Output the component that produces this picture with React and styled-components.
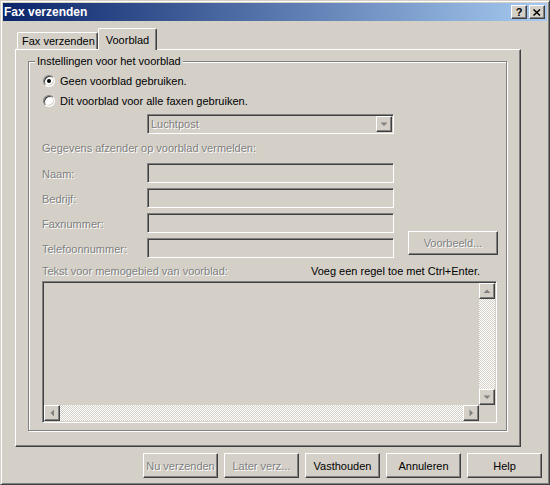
import React from 'react';
import styled, { createGlobalStyle, css } from 'styled-components';

const FACE = '#D4D0C8';
const HI = '#FFFFFF';
const SH = '#808080';
const DK = '#404040';

const Global = createGlobalStyle`
  html, body { margin: 0; padding: 0; background: ${FACE}; }
  body {
    font-family: "Liberation Sans", Arial, sans-serif;
    font-size: 11px;
    color: #000;
  }
  * { box-sizing: border-box; }
`;

const raised = css`
  border: 1px solid;
  border-color: ${HI} ${DK} ${DK} ${HI};
  box-shadow: inset -1px -1px 0 ${SH};
  background: ${FACE};
`;

const sunken = css`
  border: 1px solid;
  border-color: ${SH} ${HI} ${HI} ${SH};
  box-shadow: inset 1px 1px 0 ${DK}, inset -1px -1px 0 ${FACE};
  background: ${FACE};
`;

const disabledText = css`
  color: ${SH};
  text-shadow: 1px 1px 0 ${HI};
`;

const Window = styled.div`
  width: 550px;
  height: 485px;
  background: ${FACE};
  border: 1px solid;
  border-color: ${FACE} ${DK} ${DK} ${FACE};
  box-shadow: inset 1px 1px 0 ${HI}, inset -1px -1px 0 ${SH};
  padding: 2px;
  display: flex;
  flex-direction: column;
`;

const TitleBar = styled.div`
  height: 18px;
  flex: none;
  background: linear-gradient(to right, #0a246a, #a6caf0);
  display: flex;
  align-items: center;
  padding: 0 2px 0 1px;
`;

const TitleText = styled.div`
  flex: 1;
  color: #fff;
  font-weight: bold;
  font-size: 12px;
`;

const CaptionButton = styled.button`
  width: 16px;
  height: 14px;
  padding: 0;
  margin-left: 2px;
  ${raised}
  font: bold 11px "Liberation Sans", Arial, sans-serif;
  color: #000;
  display: flex;
  align-items: center;
  justify-content: center;
  line-height: 12px;
`;

const Body = styled.div`
  flex: 1;
  display: flex;
  flex-direction: column;
  padding: 7px 5px 0 12px;
`;

const TabStrip = styled.div`
  display: flex;
  align-items: flex-end;
  height: 21px;
  padding-left: 2px;
  position: relative;
  z-index: 1;
`;

const Tab = styled.div`
  height: ${(p) => (p.$active ? 22 : 17)}px;
  margin-bottom: ${(p) => (p.$active ? -1 : 0)}px;
  padding: ${(p) => (p.$active ? '0 7px 0 7px' : '0 2px 0 4px')};
  background: ${FACE};
  border-top: 1px solid ${HI};
  border-left: 1px solid ${HI};
  border-right: 1px solid ${DK};
  box-shadow: inset -1px 0 0 ${SH};
  border-radius: 2px 2px 0 0;
  display: flex;
  align-items: center;
  white-space: nowrap;
`;

const Panel = styled.div`
  width: 506px;
  height: 398px;
  border: 1px solid;
  border-color: ${HI} ${DK} ${DK} ${HI};
  box-shadow: inset -1px -1px 0 ${SH};
  display: flex;
  flex-direction: column;
  padding: 5px 13px 15px 12px;
`;

const GroupBox = styled.fieldset`
  flex: 1;
  margin: 0;
  min-width: 0;
  padding: 0;
  border: 1px solid ${SH};
  box-shadow: inset 1px 1px 0 ${HI}, 1px 1px 0 ${HI};
  display: flex;
  flex-direction: column;
`;

const Legend = styled.legend`
  margin-left: 6px;
  padding: 0 2px;
  line-height: 13px;
  background: ${FACE};
`;

const GroupContent = styled.div`
  flex: 1;
  display: flex;
  flex-direction: column;
  padding: 3px 9px 0 13px;
`;

const RadioRow = styled.label`
  display: flex;
  align-items: center;
  height: 20px;
`;

const RadioCircle = styled.span`
  position: relative;
  width: 12px;
  height: 12px;
  margin-left: 1px;
  margin-right: 5px;
  border-radius: 50%;
  border: 1px solid;
  border-color: ${SH} ${HI} ${HI} ${SH};
  box-shadow: inset 1px 1px 0 ${DK}, inset -1px -1px 0 ${FACE};
  background: #fff;
  flex: none;

  &::after {
    content: '';
    display: ${(p) => (p.$checked ? 'block' : 'none')};
    position: absolute;
    left: 3px;
    top: 3px;
    width: 4px;
    height: 4px;
    border-radius: 50%;
    background: #000;
  }
`;

const Combo = styled.div`
  margin: 3px 0 0 105px;
  width: 247px;
  height: 20px;
  ${sunken}
  padding: 1px;
  display: flex;
  align-items: center;
`;

const ComboText = styled.span`
  flex: 1;
  padding-left: 2px;
  ${disabledText}
`;

const ScrollButton = styled.div`
  width: 16px;
  height: 16px;
  flex: none;
  ${raised}
  display: flex;
  align-items: center;
  justify-content: center;
`;

const SectionLabel = styled.div`
  margin-top: 4px;
  height: 20px;
  display: flex;
  align-items: center;
  ${disabledText}
`;

const FieldRow = styled.div`
  margin-top: 5px;
  height: 20px;
  display: flex;
  align-items: flex-end;
`;

const FieldLabel = styled.div`
  flex: none;
  width: 105px;
  height: 20px;
  display: flex;
  align-items: center;
  padding-top: 2px;
  ${disabledText}
`;

const TextField = styled.div`
  flex: none;
  width: 247px;
  height: 20px;
  ${sunken}
`;

const PushButton = styled.button`
  flex: none;
  width: ${(p) => p.$w || 75}px;
  height: ${(p) => p.$h || 25}px;
  margin: 0 0 ${(p) => p.$mb || 0}px ${(p) => p.$ml || 0}px;
  padding: 0;
  ${raised}
  font: 11px "Liberation Sans", Arial, sans-serif;
  color: #000;
  ${(p) => p.disabled && disabledText}
`;

const MemoHeader = styled.div`
  margin-top: 6px;
  height: 14px;
  display: flex;
  align-items: center;
  justify-content: space-between;
  padding-right: 17px;
`;

const MemoLabel = styled.span`
  ${disabledText}
`;

const Memo = styled.div`
  margin-top: 3px;
  width: 455px;
  height: 142px;
  ${sunken}
  padding: 1px;
  display: grid;
  grid-template-columns: 1fr 16px;
  grid-template-rows: 1fr 16px;
`;

const ScrollBar = styled.div`
  display: flex;
  flex-direction: ${(p) => (p.$vertical ? 'column' : 'row')};
  min-width: 0;
  min-height: 0;
`;

const Track = styled.div`
  flex: 1;
  background: repeating-conic-gradient(${HI} 0 25%, ${FACE} 0 50%) 0 0 / 2px 2px;
`;

const Corner = styled.div`
  background: ${FACE};
`;

const ButtonRow = styled.div`
  display: flex;
  justify-content: flex-end;
  gap: 6px;
  margin-top: 6px;
`;

const Arrow = ({ dir }) => {
  const pts = {
    up: '0.5,4 4,0.5 7.5,4',
    down: '0.5,0.5 4,4 7.5,0.5',
    left: '4,0.5 0.5,4 4,7.5',
    right: '0.5,0.5 4,4 0.5,7.5',
  }[dir];
  const vertical = dir === 'up' || dir === 'down';
  return (
    <svg width={vertical ? 8 : 5} height={vertical ? 5 : 8} viewBox={vertical ? '0 0 8 5' : '0 0 5 8'}>
      <polygon points={pts} fill={SH} />
    </svg>
  );
};

const fields = ['Naam:', 'Bedrijf:', 'Faxnummer:', 'Telefoonnummer:'];

export default function App() {
  return (
    <>
      <Global />
      <Window>
        <TitleBar>
          <TitleText>Fax verzenden</TitleText>
          <CaptionButton>?</CaptionButton>
          <CaptionButton>
            <svg width="8" height="7" viewBox="0 0 8 7">
              <path d="M0.5 0.5 L7 6.5 M7 0.5 L0.5 6.5" stroke="#000" strokeWidth="1.5" />
            </svg>
          </CaptionButton>
        </TitleBar>
        <Body>
          <TabStrip>
            <Tab>Fax verzenden</Tab>
            <Tab $active>Voorblad</Tab>
          </TabStrip>
          <Panel>
            <GroupBox>
              <Legend>Instellingen voor het voorblad</Legend>
              <GroupContent>
                <RadioRow>
                  <RadioCircle $checked />
                  Geen voorblad gebruiken.
                </RadioRow>
                <RadioRow>
                  <RadioCircle />
                  Dit voorblad voor alle faxen gebruiken.
                </RadioRow>
                <Combo>
                  <ComboText>Luchtpost</ComboText>
                  <ScrollButton>
                    <Arrow dir="down" />
                  </ScrollButton>
                </Combo>
                <SectionLabel>Gegevens afzender op voorblad vermelden:</SectionLabel>
                {fields.map((f, i) => (
                  <FieldRow key={f}>
                    <FieldLabel>{f}</FieldLabel>
                    <TextField />
                    {i === fields.length - 1 && (
                      <PushButton disabled $w={90} $h={24} $ml={14} $mb={3}>
                        Voorbeeld...
                      </PushButton>
                    )}
                  </FieldRow>
                ))}
                <MemoHeader>
                  <MemoLabel>Tekst voor memogebied van voorblad:</MemoLabel>
                  <span>Voeg een regel toe met Ctrl+Enter.</span>
                </MemoHeader>
                <Memo>
                  <div />
                  <ScrollBar $vertical>
                    <ScrollButton>
                      <Arrow dir="up" />
                    </ScrollButton>
                    <Track />
                    <ScrollButton>
                      <Arrow dir="down" />
                    </ScrollButton>
                  </ScrollBar>
                  <ScrollBar>
                    <ScrollButton>
                      <Arrow dir="left" />
                    </ScrollButton>
                    <Track />
                    <ScrollButton>
                      <Arrow dir="right" />
                    </ScrollButton>
                  </ScrollBar>
                  <Corner />
                </Memo>
              </GroupContent>
            </GroupBox>
          </Panel>
          <ButtonRow>
            <PushButton disabled>Nu verzenden</PushButton>
            <PushButton disabled>Later verz...</PushButton>
            <PushButton>Vasthouden</PushButton>
            <PushButton>Annuleren</PushButton>
            <PushButton>Help</PushButton>
          </ButtonRow>
        </Body>
      </Window>
    </>
  );
}
